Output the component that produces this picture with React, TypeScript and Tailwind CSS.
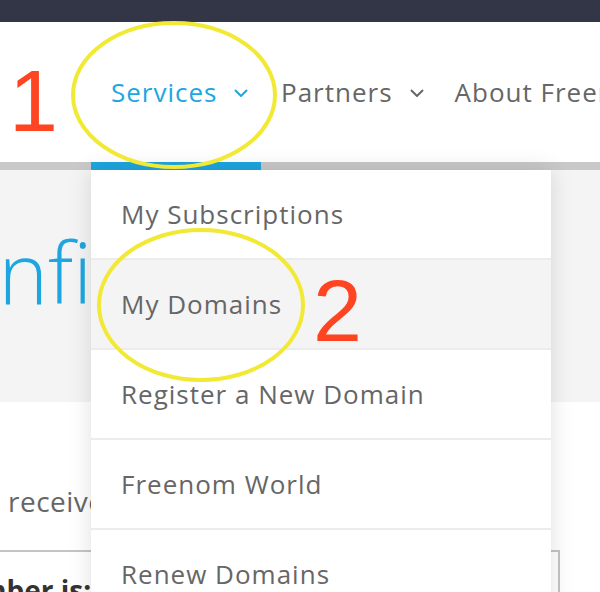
import React from 'react';

const Chevron: React.FC<{ className?: string }> = ({ className }) => (
  <svg width="14" height="8" viewBox="0 0 14 8" className={className}>
    <path d="M1 1l6 6 6-6" fill="none" stroke="currentColor" strokeWidth="2" />
  </svg>
);

const menuItems = [
  'My Subscriptions',
  'My Domains',
  'Register a New Domain',
  'Freenom World',
  'Renew Domains',
];

export default function App() {
  return (
    <div
      className="relative w-[600px] h-[592px] overflow-hidden bg-white"
      style={{ fontFamily: '"Open Sans", "Liberation Sans", sans-serif' }}
    >
      {/* top strip */}
      <div className="h-[22px] bg-[#333646]" />

      {/* header nav */}
      <div className="flex h-[148px] items-stretch border-b-[8px] border-[#c9c9c9] pl-[91px] bg-white">
        <div className="-mb-[8px] flex w-[170px] shrink-0 items-center gap-[17px] border-b-[8px] border-[#1ea6e0] pl-[20px] text-[26px] tracking-[1px] text-[#1ea6e0]">
          <span>Services</span>
          <Chevron className="mt-[2px]" />
        </div>
        <div className="flex shrink-0 items-center gap-[17px] pl-[20px] text-[26px] tracking-[1px] text-[#666]">
          <span>Partners</span>
          <Chevron className="mt-[2px]" />
        </div>
        <div className="flex shrink-0 items-center pl-[31px] text-[26px] tracking-[1px] text-[#666] whitespace-nowrap">
          About Freenom
        </div>
      </div>

      {/* page body */}
      <div className="h-[232px] bg-[#f4f4f4] overflow-hidden">
        <h1 className="mt-[60px] -ml-[103px] whitespace-nowrap text-[84px] font-light leading-none text-[#1ea6e0]">
          Confirmation
        </h1>
      </div>
      <div className="bg-white">
        <p className="mt-[85px] ml-[8px] whitespace-nowrap text-[28px] leading-[28px] tracking-[0.5px] text-[#666]">
          receive a confirmation code
        </p>
        <div className="mt-[35px] -ml-[10px] w-[570px] h-[80px] border-2 border-[#c4c4c4] pt-[24px]">
          <span className="-ml-[13px] inline-block whitespace-nowrap text-[28px] font-bold leading-[28px] text-[#333]">
            mber is:
          </span>
        </div>
      </div>

      {/* dropdown menu */}
      <div className="absolute left-[91px] top-[170px] w-[460px] bg-white shadow-[0_0_22px_rgba(0,0,0,0.13)]">
        {menuItems.map((item, i) => (
          <div
            key={item}
            className={
              'flex h-[90px] items-center border-b-2 border-[#ececec] pl-[30px] text-[26px] tracking-[1px] text-[#666] ' +
              (i === 1 ? 'bg-[#f4f4f4]' : 'bg-white')
            }
          >
            {item}
          </div>
        ))}
      </div>

      {/* annotations */}
      <svg className="absolute left-0 top-0 pointer-events-none" width="600" height="592">
        <ellipse cx="174" cy="95" rx="101" ry="72" fill="none" stroke="#f2e935" strokeWidth="4" />
        <ellipse cx="201" cy="305" rx="102" ry="75" fill="none" stroke="#f2e935" strokeWidth="4" />
      </svg>
      <div
        className="absolute left-[9px] top-[57px] text-[88px] leading-none text-[#ff4422]"
        style={{ fontFamily: '"Liberation Sans", Arial, sans-serif' }}
      >
        1
      </div>
      <div
        className="absolute left-[313px] top-[267px] text-[88px] leading-none text-[#ff4422]"
        style={{ fontFamily: '"Liberation Sans", Arial, sans-serif' }}
      >
        2
      </div>
    </div>
  );
}
